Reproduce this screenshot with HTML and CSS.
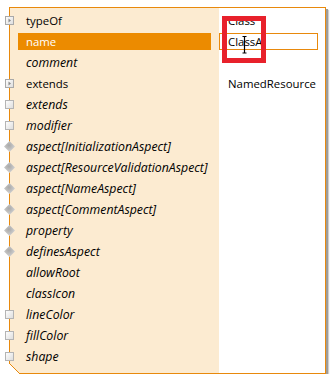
FILE: index.html
```html
<!DOCTYPE html>
<html>
<head>
<meta charset="utf-8">
<link rel="stylesheet" href="styles.css">
</head>
<body>
<svg class="defs" width="0" height="0" aria-hidden="true">
  <defs>
    <linearGradient id="gbox" x1="0" y1="0" x2="1" y2="1">
      <stop offset="0" stop-color="#ffffff"/>
      <stop offset="1" stop-color="#dcdcdc"/>
    </linearGradient>
    <radialGradient id="gdia" cx="0.45" cy="0.4" r="0.6">
      <stop offset="0" stop-color="#a8a8a8"/>
      <stop offset="1" stop-color="#d4d4d4"/>
    </radialGradient>
  </defs>
</svg>
<div class="frame">
  <div class="props">
    <div class="row"><svg class="ico" viewBox="0 0 11 11"><rect x="1.5" y="1.5" width="8" height="8" fill="url(#gbox)" stroke="#a9a9a9"/><polygon points="4.5,3.5 7,5.5 4.5,7.5" fill="#8a8a8a"/></svg><span class="lbl">typeOf</span></div>
    <div class="row"><span class="ico"></span><span class="lbl sel">name</span></div>
    <div class="row"><span class="ico"></span><span class="lbl it">comment</span></div>
    <div class="row"><svg class="ico" viewBox="0 0 11 11"><rect x="1.5" y="1.5" width="8" height="8" fill="url(#gbox)" stroke="#a9a9a9"/><polygon points="4.5,3.5 7,5.5 4.5,7.5" fill="#8a8a8a"/></svg><span class="lbl">extends</span></div>
    <div class="row"><svg class="ico" viewBox="0 0 11 11"><rect x="1.5" y="1.5" width="8" height="8" fill="url(#gbox)" stroke="#b4b4b4"/></svg><span class="lbl it">extends</span></div>
    <div class="row"><svg class="ico" viewBox="0 0 11 11"><rect x="1.5" y="1.5" width="8" height="8" fill="url(#gbox)" stroke="#b4b4b4"/></svg><span class="lbl it">modifier</span></div>
    <div class="row"><svg class="ico" viewBox="0 0 11 11"><polygon points="5.5,0 11,5.5 5.5,11 0,5.5" fill="url(#gdia)"/></svg><span class="lbl it">aspect[InitializationAspect]</span></div>
    <div class="row"><svg class="ico" viewBox="0 0 11 11"><polygon points="5.5,0 11,5.5 5.5,11 0,5.5" fill="url(#gdia)"/></svg><span class="lbl it">aspect[ResourceValidationAspect]</span></div>
    <div class="row"><svg class="ico" viewBox="0 0 11 11"><polygon points="5.5,0 11,5.5 5.5,11 0,5.5" fill="url(#gdia)"/></svg><span class="lbl it">aspect[NameAspect]</span></div>
    <div class="row"><svg class="ico" viewBox="0 0 11 11"><polygon points="5.5,0 11,5.5 5.5,11 0,5.5" fill="url(#gdia)"/></svg><span class="lbl it">aspect[CommentAspect]</span></div>
    <div class="row"><svg class="ico" viewBox="0 0 11 11"><polygon points="5.5,0 11,5.5 5.5,11 0,5.5" fill="url(#gdia)"/></svg><span class="lbl it">property</span></div>
    <div class="row"><svg class="ico" viewBox="0 0 11 11"><polygon points="5.5,0 11,5.5 5.5,11 0,5.5" fill="url(#gdia)"/></svg><span class="lbl it">definesAspect</span></div>
    <div class="row"><span class="ico"></span><span class="lbl it">allowRoot</span></div>
    <div class="row"><span class="ico"></span><span class="lbl it">classIcon</span></div>
    <div class="row"><svg class="ico" viewBox="0 0 11 11"><rect x="1.5" y="1.5" width="8" height="8" fill="url(#gbox)" stroke="#b4b4b4"/></svg><span class="lbl it">lineColor</span></div>
    <div class="row"><svg class="ico" viewBox="0 0 11 11"><rect x="1.5" y="1.5" width="8" height="8" fill="url(#gbox)" stroke="#b4b4b4"/></svg><span class="lbl it">fillColor</span></div>
    <div class="row"><svg class="ico" viewBox="0 0 11 11"><rect x="1.5" y="1.5" width="8" height="8" fill="url(#gbox)" stroke="#b4b4b4"/></svg><span class="lbl it">shape</span></div>
  </div>
  <div class="vals">
    <div class="vrow">Class</div>
    <div class="vrow inrow"><div class="input">ClassA</div></div>
    <div class="vrow"></div>
    <div class="vrow">NamedResource</div>
  </div>
  <div class="corner"></div>
  <svg class="ibeam" width="7" height="18" viewBox="0 0 7 18"><path d="M1.5 0.5h4M3.5 0.5v16.5M1.5 17h4" stroke="#000" stroke-width="1.2" fill="none"/></svg>
  <div class="mark"></div>
</div>
</body>
</html>
```
FILE: styles.css
```css
body {
  margin: 0;
  background: #ffffff;
  font-family: "Open Sans", "Noto Sans", sans-serif;
  font-size: 11.4px;
  color: #000;
}
.defs {
  position: absolute;
}
.frame {
  position: relative;
  display: flex;
  box-sizing: border-box;
  width: 317px;
  height: 367px;
  margin: 7px 0 0 9px;
  border: 1px solid #e8890c;
  box-shadow: 2px 2px 0 #9c9c9c, 3px 3px 1px #cfcfcf;
}
.props {
  width: 209px;
  flex: none;
  background: #fcebd1;
  padding-top: 2px;
}
.row {
  display: flex;
  align-items: center;
  height: 21px;
}
.ico {
  flex: none;
  width: 11px;
  height: 11px;
  margin-left: -6px;
  margin-right: 3px;
  position: relative;
}
.lbl {
  box-sizing: border-box;
  width: 193px;
  height: 17px;
  line-height: 17px;
  padding-left: 8px;
  white-space: nowrap;
}
.sel {
  background: #ec8b00;
  color: #fff;
}
.it {
  font-style: italic;
  font-size: 12.3px;
}
.vals {
  flex: 1;
  padding-top: 2px;
  background: #fff;
}
.vrow {
  height: 21px;
  line-height: 21px;
  padding-left: 9px;
}
.inrow {
  display: flex;
  align-items: center;
  padding-left: 0;
}
.input {
  box-sizing: border-box;
  width: 99px;
  height: 17px;
  line-height: 15px;
  border: 1px solid #e8890c;
  padding-left: 8px;
}
.corner {
  position: absolute;
  left: -1px;
  bottom: -1px;
  width: 11px;
  height: 11px;
  background: linear-gradient(to top right, #fff calc(50% - 0.7px), #e8890c calc(50% - 0.7px) calc(50% + 0.7px), transparent calc(50% + 0.7px));
}
.ibeam {
  position: absolute;
  left: 231px;
  top: 28px;
}
.mark {
  position: absolute;
  left: 212px;
  top: 8px;
  width: 44px;
  height: 47px;
  box-sizing: border-box;
  border: 5px solid #e8212b;
}
```
